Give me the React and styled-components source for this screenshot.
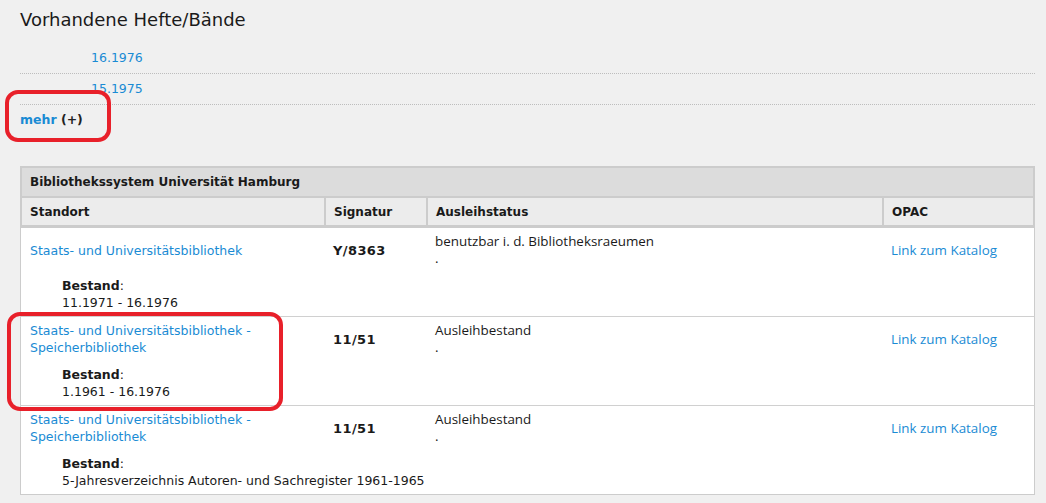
import styled, { createGlobalStyle } from "styled-components";

const GlobalStyle = createGlobalStyle`
  body {
    margin: 0;
    background: #f0f0f0;
    font-family: "DejaVu Sans", Verdana, sans-serif;
    font-size: 12.5px;
    color: #1a1a1a;
  }
`;

const issues = ["16.1976", "15.1975"];

const holdings = [
  {
    place: ["Staats- und Universitätsbibliothek"],
    signature: "Y/8363",
    status: "benutzbar i. d. Bibliotheksraeumen",
    stock: "11.1971 - 16.1976",
  },
  {
    place: ["Staats- und Universitätsbibliothek -", "Speicherbibliothek"],
    signature: "11/51",
    status: "Ausleihbestand",
    stock: "1.1961 - 16.1976",
  },
  {
    place: ["Staats- und Universitätsbibliothek -", "Speicherbibliothek"],
    signature: "11/51",
    status: "Ausleihbestand",
    stock: "5-Jahresverzeichnis Autoren- und Sachregister 1961-1965",
  },
];

const App = () => {
  return (
    <Page>
      <GlobalStyle />
      <Title>Vorhandene Hefte/Bände</Title>
      <IssueList>
        {issues.map((issue) => (
          <IssueItem key={issue}>
            <Link href="#">{issue}</Link>
          </IssueItem>
        ))}
      </IssueList>
      <More>
        <Link href="#">mehr</Link> (+)
      </More>

      <Table>
        <colgroup>
          <col style={{ width: 304 }} />
          <col style={{ width: 102 }} />
          <col style={{ width: 456 }} />
          <col style={{ width: 153 }} />
        </colgroup>
        <thead>
          <tr>
            <SystemHead colSpan={4}>Bibliothekssystem Universität Hamburg</SystemHead>
          </tr>
          <tr>
            <ColHead>Standort</ColHead>
            <ColHead>Signatur</ColHead>
            <ColHead>Ausleihstatus</ColHead>
            <ColHead $last>OPAC</ColHead>
          </tr>
        </thead>
        {holdings.map((h, i) => (
          <tbody key={i}>
            <tr>
              <Cell $first $sep={i > 0}>
                {h.place.map((line, j) => (
                  <Link key={j} href="#" $block>
                    {line}
                  </Link>
                ))}
              </Cell>
              <Cell $sep={i > 0}>
                <Signature>{h.signature}</Signature>
              </Cell>
              <Cell $sep={i > 0}>
                <Status>
                  {h.status}
                  <br />.
                </Status>
              </Cell>
              <Cell $last $sep={i > 0}>
                <CatalogLink href="#">Link zum Katalog</CatalogLink>
              </Cell>
            </tr>
            <tr>
              <StockCell colSpan={4} $bottom={i === holdings.length - 1}>
                <b>Bestand</b>:
                <br />
                {h.stock}
              </StockCell>
            </tr>
          </tbody>
        ))}
      </Table>

      <Marker $left={5} $top={90} $width={106} $height={52} />
      <Marker $left={7} $top={312} $width={276} $height={99} />
    </Page>
  );
};

const Page = styled.div`
  position: relative;
  padding: 8px 11px 20px 20px;
`;

const Title = styled.h2`
  margin: 0;
  font-size: 18px;
  font-weight: normal;
  line-height: 23px;
  color: #1a1a1a;
`;

const IssueList = styled.ul`
  list-style: none;
  margin: 12px 0 0;
  padding: 0;
`;

const IssueItem = styled.li`
  padding: 6px 0 7px 71px;
  line-height: 17px;
  border-bottom: 1px dotted #bdbdbd;
`;

const Link = styled.a`
  color: #1a8bd4;
  text-decoration: none;
  display: ${(p) => (p.$block ? "block" : "inline")};
`;

const More = styled.div`
  padding-top: 6px;
  line-height: 17px;
  font-weight: bold;
  color: #222;
`;

const Table = styled.table`
  width: 100%;
  margin-top: 38px;
  table-layout: fixed;
  border-collapse: separate;
  border-spacing: 0;
  line-height: 17px;
`;

const SystemHead = styled.th`
  text-align: left;
  background: #dcdcdc;
  border: 2px solid #cccccc;
  padding: 6px 8px 5px;
  font-size: 12px;
  font-weight: bold;
`;

const ColHead = styled.th`
  text-align: left;
  background: #ececec;
  border-left: 2px solid #cccccc;
  border-right: ${(p) => (p.$last ? "2px solid #cccccc" : "none")};
  border-bottom: 3px solid #cccccc;
  padding: 6px 8px 4px;
  font-size: 12px;
  font-weight: bold;
`;

const Cell = styled.td`
  background: #fff;
  vertical-align: middle;
  padding: 5px 9px 4px;
  border-left: ${(p) => (p.$first ? "1px solid #cccccc" : "none")};
  border-right: ${(p) => (p.$last ? "1px solid #cccccc" : "none")};
  border-top: ${(p) => (p.$sep ? "1px solid #d0d0d0" : "none")};
`;

const StockCell = styled.td`
  background: #fff;
  padding: 6px 9px 5px 41px;
  border-left: 1px solid #cccccc;
  border-right: 1px solid #cccccc;
  border-bottom: ${(p) => (p.$bottom ? "1px solid #cccccc" : "none")};
`;

const Signature = styled.span`
  font-size: 13px;
  font-weight: bold;
  letter-spacing: 0.4px;
`;

const Status = styled.div`
  font-family: "Open Sans", "Liberation Sans", sans-serif;
  font-size: 13.4px;
`;

const CatalogLink = styled(Link)`
  font-family: "Open Sans", "Liberation Sans", sans-serif;
  font-size: 13.4px;
`;

const Marker = styled.div`
  position: absolute;
  left: ${(p) => p.$left}px;
  top: ${(p) => p.$top}px;
  width: ${(p) => p.$width}px;
  height: ${(p) => p.$height}px;
  box-sizing: border-box;
  border: 4px solid #e8202a;
  border-radius: 13px;
  pointer-events: none;
`;

export default App;
